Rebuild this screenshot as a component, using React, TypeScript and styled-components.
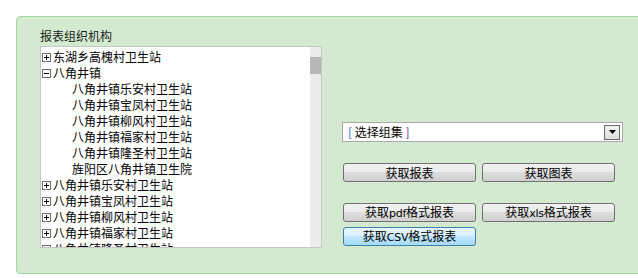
import styled, { createGlobalStyle } from "styled-components"

const GlobalStyle = createGlobalStyle`
  html, body {
    margin: 0;
    padding: 0;
    background: #ffffff;
  }
  body {
    font-family: "Noto Sans CJK SC", "DejaVu Sans", sans-serif;
    font-size: 12px;
    color: #000000;
  }
`

const Page = styled.div`
  width: 638px;
  height: 278px;
  overflow: hidden;
  padding: 16px 0 0 16px;
  box-sizing: border-box;
`

const Panel = styled.div`
  width: 660px;
  height: 258px;
  box-sizing: border-box;
  background: #d3ead1;
  border: 1px solid #a9d4a6;
  border-radius: 4px;
  display: flex;
  gap: 20px;
  padding: 10px 0 0 23px;
`

const LeftColumn = styled.div`
  display: flex;
  flex-direction: column;
  width: 282px;
`

const Label = styled.div`
  line-height: 17px;
  height: 19px;
  color: #222222;
`

const ListBox = styled.div`
  position: relative;
  width: 282px;
  height: 202px;
  box-sizing: border-box;
  border: 1px solid #c6c6c6;
  background: #ffffff;
  overflow: hidden;
`

const TreeList = styled.div`
  padding: 2px 12px 0 1px;
`

const TreeRow = styled.div<{ $indent?: boolean }>`
  display: flex;
  align-items: center;
  height: 16px;
  line-height: 16px;
  white-space: nowrap;
  padding-left: ${(p) => (p.$indent ? "30px" : "0")};
`

const Expander = styled.span`
  position: relative;
  width: 9px;
  height: 9px;
  box-sizing: border-box;
  border: 1px solid #6d6d6d;
  margin-right: 2px;
  flex-shrink: 0;
  &::before {
    content: "";
    position: absolute;
    left: 1px;
    top: 3px;
    width: 5px;
    height: 1px;
    background: #000;
  }
`

const Plus = styled(Expander)`
  &::after {
    content: "";
    position: absolute;
    left: 3px;
    top: 1px;
    width: 1px;
    height: 5px;
    background: #000;
  }
`

const ScrollTrack = styled.div`
  position: absolute;
  right: 0;
  top: 0;
  bottom: 0;
  width: 11px;
  background: #ececec;
`

const ScrollThumb = styled.div`
  position: absolute;
  left: 0;
  right: 0;
  top: 10px;
  height: 17px;
  background: #b7b7b7;
`

const RightColumn = styled.div`
  width: 281px;
  padding-top: 95px;
  display: flex;
  flex-direction: column;
`

const Select = styled.div`
  height: 20px;
  box-sizing: border-box;
  border: 1px solid #a9a9a9;
  background: #ffffff;
  display: flex;
  align-items: center;
  justify-content: space-between;
  padding: 0 2px 0 5px;
  line-height: 16px;
`

const Bracket = styled.span<{ $color: string }>`
  color: ${(p) => p.$color};
`

const ArrowButton = styled.div`
  width: 16px;
  height: 15px;
  box-sizing: border-box;
  border: 1px solid #6a6a6a;
  background: linear-gradient(#f4f4f4, #dcdcdc);
  display: flex;
  align-items: center;
  justify-content: center;
`

const ButtonRow = styled.div<{ $top: number }>`
  display: flex;
  gap: 6px;
  margin-top: ${(p) => p.$top}px;
  padding-left: 1px;
`

const Button = styled.button<{ $active?: boolean }>`
  width: 133px;
  height: 19px;
  padding: 0;
  box-sizing: border-box;
  border: 1px solid ${(p) => (p.$active ? "#3c7fb1" : "#707070")};
  border-radius: 3px;
  background: ${(p) =>
    p.$active
      ? "linear-gradient(#eaf6fd 0%, #d9f0fc 45%, #bee6fd 50%, #a7d9f5 100%)"
      : "linear-gradient(#f2f2f2 0%, #ebebeb 45%, #dddddd 50%, #cfcfcf 100%)"};
  font-family: "Noto Sans CJK SC", "DejaVu Sans", sans-serif;
  font-size: 12px;
  line-height: 16px;
  color: #000;
`

const Latin = styled.span`
  font-family: "DejaVu Sans", sans-serif;
  font-size: 11px;
  letter-spacing: -0.3px;
`

const children = [
  "八角井镇乐安村卫生站",
  "八角井镇宝凤村卫生站",
  "八角井镇柳风村卫生站",
  "八角井镇福家村卫生站",
  "八角井镇隆圣村卫生站",
  "旌阳区八角井镇卫生院",
]

const collapsed = [
  "八角井镇乐安村卫生站",
  "八角井镇宝凤村卫生站",
  "八角井镇柳风村卫生站",
  "八角井镇福家村卫生站",
  "八角井镇隆圣村卫生站",
]

export default function App() {
  return (
    <Page>
      <GlobalStyle />
      <Panel>
        <LeftColumn>
          <Label>报表组织机构</Label>
          <ListBox>
            <TreeList>
              <TreeRow>
                <Plus />
                东湖乡高槐村卫生站
              </TreeRow>
              <TreeRow>
                <Expander />
                八角井镇
              </TreeRow>
              {children.map((name, i) => (
                <TreeRow key={"c" + i} $indent>
                  {name}
                </TreeRow>
              ))}
              {collapsed.map((name, i) => (
                <TreeRow key={"n" + i}>
                  <Plus />
                  {name}
                </TreeRow>
              ))}
            </TreeList>
            <ScrollTrack>
              <ScrollThumb />
            </ScrollTrack>
          </ListBox>
        </LeftColumn>
        <RightColumn>
          <Select>
            <span>
              <Bracket $color="#1f5fbf">[</Bracket> 选择组集 <Bracket $color="#6a2a9a">]</Bracket>
            </span>
            <ArrowButton>
              <svg width="7" height="4" viewBox="0 0 7 4">
                <path d="M0 0H7L3.5 4Z" fill="#000" />
              </svg>
            </ArrowButton>
          </Select>
          <ButtonRow $top={21}>
            <Button>获取报表</Button>
            <Button>获取图表</Button>
          </ButtonRow>
          <ButtonRow $top={21}>
            <Button>
              获取<Latin>pdf</Latin>格式报表
            </Button>
            <Button>
              获取<Latin>xls</Latin>格式报表
            </Button>
          </ButtonRow>
          <ButtonRow $top={5}>
            <Button $active>
              获取<Latin>CSV</Latin>格式报表
            </Button>
          </ButtonRow>
        </RightColumn>
      </Panel>
    </Page>
  )
}
